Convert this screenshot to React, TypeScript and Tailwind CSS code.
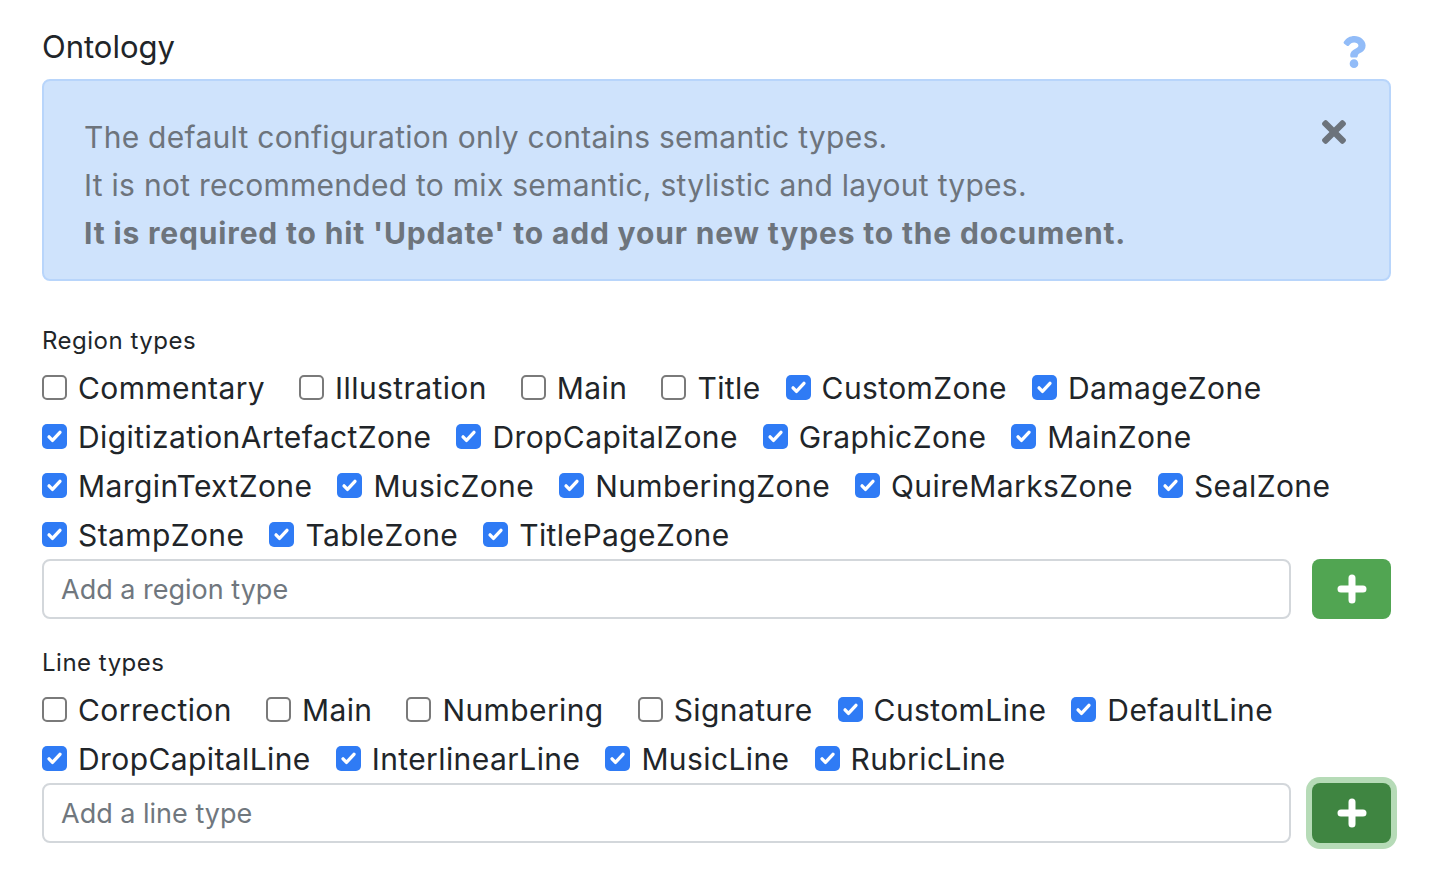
import React from 'react'

const regionRows: [string, boolean][][] = [
  [
    ['Commentary', false],
    ['Illustration', false],
    ['Main', false],
    ['Title', false],
    ['CustomZone', true],
    ['DamageZone', true],
  ],
  [
    ['DigitizationArtefactZone', true],
    ['DropCapitalZone', true],
    ['GraphicZone', true],
    ['MainZone', true],
  ],
  [
    ['MarginTextZone', true],
    ['MusicZone', true],
    ['NumberingZone', true],
    ['QuireMarksZone', true],
    ['SealZone', true],
  ],
  [
    ['StampZone', true],
    ['TableZone', true],
    ['TitlePageZone', true],
  ],
]

const lineRows: [string, boolean][][] = [
  [
    ['Correction', false],
    ['Main', false],
    ['Numbering', false],
    ['Signature', false],
    ['CustomLine', true],
    ['DefaultLine', true],
  ],
  [
    ['DropCapitalLine', true],
    ['InterlinearLine', true],
    ['MusicLine', true],
    ['RubricLine', true],
  ],
]

function Check({ label, checked, first }: { label: string; checked: boolean; first: boolean }) {
  const spacing = first ? '' : checked ? 'ml-[25px]' : 'ml-[34px]'
  return (
    <label className={`flex items-center gap-[11px] cursor-pointer ${spacing}`}>
      {checked ? (
        <span className="flex h-[25px] w-[25px] items-center justify-center rounded-[5px] bg-[#2f7bf5]">
          <svg viewBox="0 0 16 16" className="h-[19px] w-[19px]">
            <path d="M3.4 8.3l2.9 3 6.3-6.8" fill="none" stroke="#fff" strokeWidth="2.8" strokeLinecap="round" strokeLinejoin="round" />
          </svg>
        </span>
      ) : (
        <span className="h-[25px] w-[25px] rounded-[5px] border-2 border-[#7a7a7a] bg-white" />
      )}
      <span className="text-[30px] leading-none tracking-[0.4px] text-[#212529]">{label}</span>
    </label>
  )
}

function CheckRows({ rows }: { rows: [string, boolean][][] }) {
  return (
    <div className="flex flex-col">
      {rows.map((row, i) => (
        <div key={i} className="flex h-[49px] items-center">
          {row.map(([label, checked], j) => (
            <Check key={label} label={label} checked={checked} first={j === 0} />
          ))}
        </div>
      ))}
    </div>
  )
}

function PlusIcon() {
  return (
    <svg viewBox="0 0 30 30" className="h-[30px] w-[30px]">
      <path d="M15 4v22M4 15h22" stroke="#fff" strokeWidth="7" strokeLinecap="round" />
    </svg>
  )
}

function AddRow({ placeholder, focused }: { placeholder: string; focused?: boolean }) {
  return (
    <div className="flex items-center gap-[21px]">
      <input
        placeholder={placeholder}
        className="h-[60px] flex-1 rounded-[8px] border-2 border-[#d3d7db] bg-white px-[17px] text-[27px] text-[#212529] outline-none placeholder:text-[#70777e]"
      />
      {focused ? (
        <button
          type="button"
          className="flex h-[60px] w-[79px] items-center justify-center rounded-[8px] bg-[#3f8541] ring-[6px] ring-[#b6dbb7]"
        >
          <PlusIcon />
        </button>
      ) : (
        <button
          type="button"
          className="flex h-[60px] w-[79px] items-center justify-center rounded-[8px] bg-[#51a552]"
        >
          <PlusIcon />
        </button>
      )}
    </div>
  )
}

export default function App() {
  return (
    <div className="min-h-screen w-full bg-white pl-[42px] pr-[49px] pt-[29px] font-['Inter','Noto_Sans',sans-serif] antialiased">
      {/* Header */}
      <div className="flex h-[36px] items-center justify-between">
        <h2 className="text-[31px] leading-[36px] text-[#212529]">Ontology</h2>
        <svg viewBox="0 0 384 512" className="mr-[25px] mt-[10px] h-[32px] w-[24px]" fill="#92bcf8">
          <path d="M202.021 0C122.202 0 70.503 32.703 29.914 91.026c-7.363 10.58-5.093 25.086 5.178 32.874l43.138 32.709c10.373 7.865 25.132 6.026 33.253-4.148 25.049-31.381 43.63-49.449 82.757-49.449 30.764 0 68.816 19.799 68.816 49.631 0 22.552-18.617 34.134-48.993 51.164-35.423 19.860-82.299 44.576-82.299 106.405V320c0 13.255 10.745 24 24 24h72.471c13.255 0 24-10.745 24-24v-5.773c0-42.86 125.268-44.645 125.268-160.627C377.504 66.256 286.902 0 202.021 0zM192 373.459c-38.196 0-69.271 31.075-69.271 69.271 0 38.195 31.075 69.27 69.271 69.27s69.271-31.075 69.271-69.271-31.075-69.27-69.271-69.27z" />
        </svg>
      </div>

      {/* Alert */}
      <div className="relative mt-[14px] h-[202px] rounded-[8px] border-2 border-[#b8d5fb] bg-[#cfe3fc] pl-[40px] pt-[32px] text-[30px] leading-[48px] tracking-[0.27px] text-[#6d747c]">
        <p>The default configuration only contains semantic types.</p>
        <p>It is not recommended to mix semantic, stylistic and layout types.</p>
        <p className="font-bold tracking-[0.84px]">It is required to hit 'Update' to add your new types to the document.</p>
        <button type="button" className="absolute right-[43px] top-[39px]">
          <svg viewBox="0 80 352 352" className="h-[24px] w-[24px]" fill="#6c737b">
            <path d="M242.72 256l100.07-100.07c12.28-12.28 12.28-32.19 0-44.48l-22.24-22.24c-12.28-12.28-32.19-12.28-44.48 0L176 189.28 75.93 89.21c-12.28-12.28-32.19-12.28-44.48 0L9.21 111.45c-12.28 12.28-12.28 32.19 0 44.48L109.28 256 9.21 356.07c-12.28 12.28-12.28 32.19 0 44.48l22.24 22.24c12.28 12.28 32.2 12.28 44.48 0L176 322.72l100.07 100.07c12.28 12.28 32.2 12.28 44.48 0l22.24-22.24c12.28-12.28 12.28-32.19 0-44.48L242.72 256z" />
          </svg>
        </button>
      </div>

      {/* Region types */}
      <div className="mt-[42px]">
        <div className="mb-[4px] text-[24px] leading-[36px] tracking-[0.5px] text-[#212529]">Region types</div>
        <CheckRows rows={regionRows} />
        <AddRow placeholder="Add a region type" />
      </div>

      {/* Line types */}
      <div className="mt-[26px]">
        <div className="mb-[4px] text-[24px] leading-[36px] tracking-[0.5px] text-[#212529]">Line types</div>
        <CheckRows rows={lineRows} />
        <AddRow placeholder="Add a line type" focused />
      </div>
    </div>
  )
}
